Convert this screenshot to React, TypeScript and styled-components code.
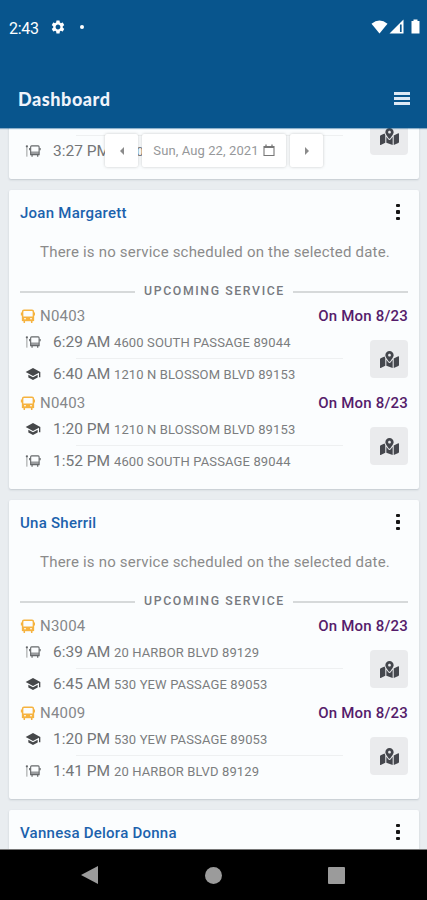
import React from "react";
import styled, { createGlobalStyle } from "styled-components";
import { FaMapMarkedAlt } from "react-icons/fa";
import { MdSchool, MdSettings } from "react-icons/md";

const GlobalStyle = createGlobalStyle`
  * { box-sizing: border-box; }
  body { margin: 0; background: #e9edf0; font-family: Roboto, "Liberation Sans", sans-serif; }
  button { font: inherit; border: 0; padding: 0; margin: 0; }
`;

const Screen = styled.div`
  width: 427px;
  height: 900px;
  display: flex;
  flex-direction: column;
  overflow: hidden;
  background: #e9edf0;
`;

const Header = styled.header`
  flex: none;
  height: 128px;
  background: #08558d;
  color: #fff;
  z-index: 1;
  box-shadow: 0 1px 1px rgba(8, 85, 141, 0.45);
`;

const StatusBar = styled.div`
  height: 54px;
  padding: 0 6px 0 9px;
  display: flex;
  align-items: center;
  justify-content: space-between;
`;

const StatusGroup = styled.div`
  display: flex;
  align-items: center;
`;

const Clock = styled.span`
  width: 30px;
  font-size: 16px;
  letter-spacing: -0.3px;
  margin-right: 11px;
  padding-top: 2px;
`;

const NotificationDot = styled.i`
  width: 4px;
  height: 4px;
  margin-left: 14px;
  border-radius: 50%;
  background: #fff;
`;

const TitleBar = styled.div`
  height: 74px;
  padding: 15px 17px 0 18px;
  display: flex;
  align-items: flex-start;
  justify-content: space-between;
`;

const Title = styled.h1`
  margin: 0;
  padding-top: 18px;
  font: 900 18px/24px Lato, sans-serif;
  letter-spacing: 0.55px;
  color: #eff3fb;
`;

const MenuButton = styled.button`
  display: flex;
  flex-direction: column;
  gap: 2px;
  margin-top: 23px;
  background: none;
`;

const MenuBar = styled.i`
  width: 16px;
  height: 3px;
  background: #dde9f5;
`;

const Viewport = styled.main`
  position: relative;
  flex: 1;
  overflow: hidden;
  min-height: 0;
`;

const CardList = styled.div`
  display: flex;
  flex-direction: column;
  gap: 11px;
  padding: 0 8px 0 9px;
  margin-top: -45px;
`;

const Card = styled.section`
  flex: none;
  padding: 0 11px 9px;
  background: #fbfdfe;
  border-radius: 2px;
  box-shadow: 0 1px 2px rgba(60, 75, 90, 0.22);
`;

const CardHeader = styled.div`
  height: 46px;
  display: flex;
  align-items: center;
  justify-content: space-between;
`;

const StudentName = styled.h2`
  margin: 0;
  font-size: 15px;
  font-weight: 500;
  letter-spacing: 0.25px;
  color: #1c62ad;
`;

const MoreButton = styled.button`
  display: flex;
  flex-direction: column;
  align-items: center;
  gap: 3px;
  width: 21px;
  margin-top: -2px;
  background: none;
`;

const MoreDot = styled.i`
  width: 4px;
  height: 3.5px;
  border-radius: 1px;
  background: #151515;
`;

const Message = styled.p`
  margin: 0 0 8px;
  padding-left: 2px;
  height: 32px;
  line-height: 32px;
  text-align: center;
  white-space: nowrap;
  font-size: 15px;
  letter-spacing: 0.19px;
  color: #8b8b8b;
`;

const SectionLabel = styled.div`
  height: 30px;
  display: flex;
  align-items: center;
  gap: 9px;
  font-size: 12.3px;
  font-weight: 500;
  letter-spacing: 1.6px;
  white-space: nowrap;
  color: #777a80;

  &::before,
  &::after {
    content: "";
    flex: 1;
    height: 2px;
    margin-top: 2px;
    background: #d6d9da;
  }

  &::after {
    margin-left: -1px;
  }
`;

const ServiceBlock = styled.div`
  height: 87px;
`;

const ServiceHeader = styled.div`
  height: 20px;
  display: flex;
  align-items: center;
`;

const RouteName = styled.span`
  margin-left: 5px;
  flex: 1;
  font-size: 15px;
  letter-spacing: 0.2px;
  color: #85878a;
`;

const ServiceDate = styled.span`
  font-size: 15px;
  font-weight: 500;
  letter-spacing: 0.2px;
  color: #551c6b;
`;

const ServiceBody = styled.div`
  height: 64px;
  display: flex;
  align-items: center;
`;

const Stops = styled.div`
  flex: 1;
  min-width: 0;
`;

const Stop = styled.div`
  height: 32px;
  display: grid;
  grid-template-columns: 33px 61px 1fr;
  align-items: center;
  white-space: nowrap;

  & + & {
    background: linear-gradient(#eef0f1, #eef0f1) 56px 0 / 267px 1px no-repeat;
  }
`;

const StopIcon = styled.span`
  display: flex;
  width: 16px;
  margin-left: 5px;
  color: #66696b;
`;

const StopTime = styled.span`
  font-size: 15.5px;
  color: #747678;
`;

const StopAddress = styled.span`
  padding-top: 1px;
  font-size: 13px;
  letter-spacing: 0.13px;
  color: #7b7d7f;
`;

const MapButton = styled.button`
  flex: none;
  width: 38px;
  height: 38px;
  margin-top: 2px;
  display: flex;
  align-items: center;
  justify-content: center;
  border-radius: 4px;
  background: #eaebed;
  color: #45474d;
`;

const DatePicker = styled.div`
  position: absolute;
  top: 6px;
  left: 105px;
  display: flex;
  gap: 4px;
`;

const PickerButton = styled.button<{ $width: number }>`
  width: ${(p) => p.$width}px;
  height: 33px;
  display: flex;
  align-items: center;
  justify-content: center;
  gap: 4px;
  border-radius: 2px;
  background: #fff;
  box-shadow: 0 0 3px rgba(50, 50, 50, 0.26);
  font-size: 13px;
  letter-spacing: 0.1px;
  white-space: nowrap;
  color: #96989a;
`;

const NavBar = styled.nav`
  flex: none;
  height: 51px;
  padding: 0 82px 0 81px;
  display: flex;
  align-items: center;
  justify-content: space-between;
  border-top: 1px solid #777;
  background: #000;
`;

const BusIcon = () => (
  <svg width="15" height="15" viewBox="-1 0 15 15" fill="none">
    <path d="M3 1.2h8q1.4 0 1.4 1.5v8.5H1.6V2.7Q1.6 1.2 3 1.2Z" stroke="#f6b340" strokeWidth="1.5" />
    <path d="M1.5 7.5h11v4.7h-11Z" fill="#f6b340" />
    <path d="M3 9.7h2M9 9.7h2" stroke="#fff" strokeWidth="1.1" />
    <path d="M.6 3.5v3M13.4 3.5v3M3.3 11v3M10.7 11v3" stroke="#f6b340" strokeWidth="1.5" />
  </svg>
);

const BusStopIcon = () => (
  <svg width="17" height="14" viewBox="0 0 17 14" fill="none" stroke="currentColor">
    <circle cx="2" cy="2" r="1.2" fill="currentColor" stroke="none" />
    <path d="M2 2v11" strokeWidth="1" opacity=".7" />
    <path d="M7 1.5h7q1 0 1 1.2v8.1H6V2.7Q6 1.5 7 1.5Z" strokeWidth="1.2" />
    <path d="M6 7.5h9v3.3H6Z" fill="currentColor" stroke="none" opacity=".65" />
    <path d="M5 3.8v2.4M16 3.8v2.4M7.5 11v2M13.5 11v2" strokeWidth="1.3" />
  </svg>
);

const SignalIcons = () => (
  <svg width="50" height="18" viewBox="0 0 50 18" fill="#fff">
    <path d="M.5 5.7Q8.5-.7 16.5 5.7L8.5 15.5Z" />
    <path d="M18.5 15.5 32.5 1.5v14Z" />
    <path d="M29.8 6.5v7.5" stroke="#08558d" strokeWidth="1.7" />
    <path d="M40.5 3h2V1.5h4V3h2v12.5h-8Z" />
  </svg>
);

const CalendarIcon = () => (
  <svg width="12" height="13" viewBox="0 0 12 13" fill="none" stroke="#777">
    <path d="M1 2.5h10v9H1Z" strokeWidth="1.1" />
    <path d="M1 3.3h10M3 .5v2M9 .5v2" strokeWidth="1.3" />
  </svg>
);

const Arrow = ({ d }: { d: string }) => (
  <svg width="6" height="8" viewBox="0 0 6 8" fill="#8b8b8b">
    <path d={d} />
  </svg>
);

type StopData = { kind: "stop" | "school"; time: string; address: string };
type ServiceData = { route: string; stops: StopData[] };

const student = (
  name: string,
  home: string,
  school: string,
  routes: [string, string],
  times: [string, string, string, string]
): { name: string; services: ServiceData[] } => ({
  name,
  services: [
    {
      route: routes[0],
      stops: [
        { kind: "stop", time: times[0], address: home },
        { kind: "school", time: times[1], address: school },
      ],
    },
    {
      route: routes[1],
      stops: [
        { kind: "school", time: times[2], address: school },
        { kind: "stop", time: times[3], address: home },
      ],
    },
  ],
});

const students = [
  student("Joan Margarett", "4600 SOUTH PASSAGE 89044", "1210 N BLOSSOM BLVD 89153",
    ["N0403", "N0403"], ["6:29 AM", "6:40 AM", "1:20 PM", "1:52 PM"]),
  student("Una Sherril", "20 HARBOR BLVD 89129", "530 YEW PASSAGE 89053",
    ["N3004", "N4009"], ["6:39 AM", "6:45 AM", "1:20 PM", "1:41 PM"]),
];

const StopRow = ({ stop }: { stop: StopData }) => (
  <Stop>
    <StopIcon>{stop.kind === "stop" ? <BusStopIcon /> : <MdSchool size={16} color="#46484a" />}</StopIcon>
    <StopTime>{stop.time}</StopTime>
    <StopAddress>{stop.address}</StopAddress>
  </Stop>
);

const ServiceStops = ({ children }: { children: React.ReactNode }) => (
  <ServiceBody>
    <Stops>{children}</Stops>
    <MapButton aria-label="Show map">
      <FaMapMarkedAlt size={19} />
    </MapButton>
  </ServiceBody>
);

const Service = ({ service }: { service: ServiceData }) => (
  <ServiceBlock>
    <ServiceHeader>
      <BusIcon />
      <RouteName>{service.route}</RouteName>
      <ServiceDate>On Mon 8/23</ServiceDate>
    </ServiceHeader>
    <ServiceStops>
      {service.stops.map((s) => (
        <StopRow key={s.time} stop={s} />
      ))}
    </ServiceStops>
  </ServiceBlock>
);

const StudentHeader = ({ name }: { name: string }) => (
  <CardHeader>
    <StudentName>{name}</StudentName>
    <MoreButton aria-label="More">
      <MoreDot />
      <MoreDot />
      <MoreDot />
    </MoreButton>
  </CardHeader>
);

export default function App() {
  return (
    <Screen>
      <GlobalStyle />
      <Header>
        <StatusBar>
          <StatusGroup>
            <Clock>2:43</Clock>
            <MdSettings size={16} />
            <NotificationDot />
          </StatusGroup>
          <SignalIcons />
        </StatusBar>
        <TitleBar>
          <Title>Dashboard</Title>
          <MenuButton aria-label="Menu">
            <MenuBar />
            <MenuBar />
            <MenuBar />
          </MenuButton>
        </TitleBar>
      </Header>
      <Viewport>
        <CardList>
          <Card>
            <ServiceBlock>
              <ServiceHeader />
              <ServiceStops>
                <Stop />
                <StopRow stop={{ kind: "stop", time: "3:27 PM", address: "4600" }} />
              </ServiceStops>
            </ServiceBlock>
          </Card>
          {students.map((s) => (
            <Card key={s.name}>
              <StudentHeader name={s.name} />
              <Message>There is no service scheduled on the selected date.</Message>
              <SectionLabel>UPCOMING SERVICE</SectionLabel>
              {s.services.map((service, i) => (
                <Service key={i} service={service} />
              ))}
            </Card>
          ))}
          <Card>
            <StudentHeader name="Vannesa Delora Donna" />
          </Card>
        </CardList>
        <DatePicker>
          <PickerButton $width={33} aria-label="Previous day">
            <Arrow d="M5 0v8L1 4Z" />
          </PickerButton>
          <PickerButton $width={144}>
            Sun, Aug 22, 2021
            <CalendarIcon />
          </PickerButton>
          <PickerButton $width={33} aria-label="Next day">
            <Arrow d="M1 0v8l4-4Z" />
          </PickerButton>
        </DatePicker>
      </Viewport>
      <NavBar>
        <svg width="17" height="18" viewBox="0 0 17 18">
          <path d="M17 0v18L0 9Z" fill="#9b9b9b" />
        </svg>
        <svg width="17" height="17" viewBox="0 0 17 17">
          <circle cx="8.5" cy="8.5" r="8.5" fill="#9b9b9b" />
        </svg>
        <svg width="17" height="17" viewBox="0 0 17 17">
          <rect width="17" height="17" rx="1" fill="#9b9b9b" />
        </svg>
      </NavBar>
    </Screen>
  );
}
